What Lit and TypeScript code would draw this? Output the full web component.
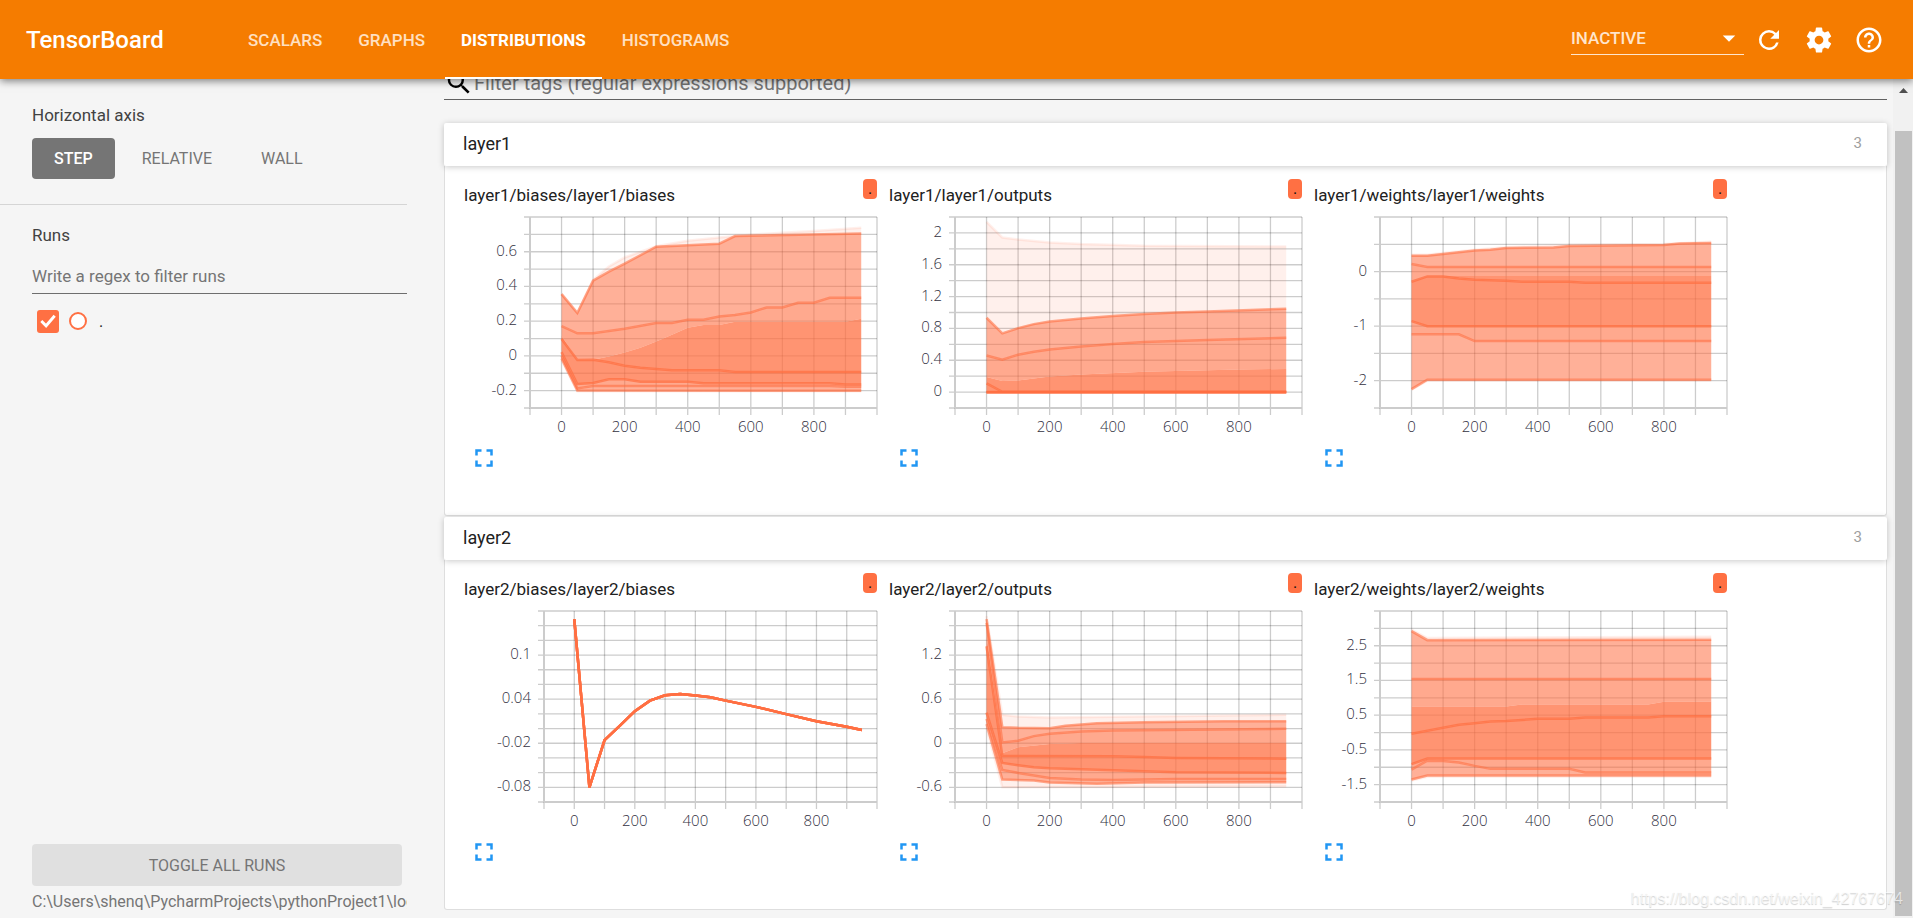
import { LitElement, html, svg, css } from "lit";
import { customElement, property } from "lit/decorators.js";

type Series = [number, number][];

interface ChartSpec {
  title: string;
  left: number;
  min: number;
  max: number;
  gridStep: number;
  labels: number[];
  /** Percentile curves, highest first: max, 93, 84, 69, 50, 30, 16, 7, min. */
  curves: Series[];
}

const END = 950;
const flat = (v: number): Series => [[0, v], [END, v]];

const layer1: ChartSpec[] = [
  {
    title: "layer1/biases/layer1/biases",
    left: 66, min: -0.3, max: 0.8, gridStep: 0.1,
    labels: [-0.2, 0, 0.2, 0.4, 0.6],
    curves: [
      [[0, .358], [50, .249], [100, .437], [150, .515], [200, .567], [300, .632], [400, .663], [500, .682], [600, .698], [700, .71], [800, .72], [END, .738]],
      [[0, .356], [50, .247], [100, .433], [150, .485], [200, .531], [300, .629], [500, .646], [550, .69], [END, .705]],
      [[0, .172], [50, .13], [100, .13], [200, .156], [300, .189], [350, .189], [400, .208], [450, .208], [500, .227], [550, .235], [600, .25], [650, .279], [700, .279], [750, .306], [800, .306], [850, .335], [END, .335]],
      [[0, .116], [50, -.022], [100, -.022], [150, -.003], [200, .02], [250, .047], [300, .083], [350, .122], [400, .162], [450, .178], [500, .178], [550, .197], [900, .197], [END, .214]],
      [[0, .097], [50, -.024], [100, -.022], [150, -.037], [200, -.057], [250, -.068], [350, -.083], [500, -.083], [550, -.093], [END, -.093]],
      [[0, .022], [50, -.162], [100, -.156], [150, -.135], [200, -.135], [250, -.149], [400, -.149], [450, -.158], [850, -.158], [900, -.164], [END, -.164]],
      [[0, 0], [50, -.187], [100, -.174], [850, -.174], [900, -.178], [END, -.178]],
      [[0, -.015], [50, -.199], [END, -.201]],
      [[0, -.025], [50, -.203], [END, -.204]],
    ],
  },
  {
    title: "layer1/layer1/outputs",
    left: 66, min: -0.2, max: 2.2, gridStep: 0.2,
    labels: [0, 0.4, 0.8, 1.2, 1.6, 2],
    curves: [
      [[0, 2.14], [50, 1.943], [100, 1.918], [200, 1.88], [300, 1.86], [500, 1.838], [END, 1.83]],
      [[0, .934], [50, .737], [100, .804], [150, .854], [200, .888], [300, .925], [400, .955], [500, .98], [600, 1], [700, 1.013], [END, 1.047]],
      [[0, .46], [50, .406], [100, .469], [150, .507], [200, .536], [300, .574], [400, .603], [500, .628], [700, .653], [END, .683]],
      [[0, .188], [50, .138], [100, .147], [200, .197], [300, .222], [500, .255], [800, .285], [END, .29]],
      [[0, .109], [50, .003], [END, .003]],
      flat(0), flat(-.002), flat(-.006), flat(-.008),
    ],
  },
  {
    title: "layer1/weights/layer1/weights",
    left: 66, min: -2.5, max: 1, gridStep: 0.5,
    labels: [-2, -1, 0],
    curves: [
      [[0, .31], [50, .31], [100, .34], [200, .4], [300, .445], [500, .485], [800, .505], [END, .545]],
      [[0, .29], [50, .29], [100, .32], [200, .388], [250, .4], [300, .43], [450, .443], [500, .467], [800, .486], [850, .516], [END, .522]],
      [[0, .137], [50, .082], [END, .082]],
      [[0, -.18], [50, -.082], [END, -.082]],
      [[0, -.186], [50, -.089], [100, -.089], [150, -.125], [200, -.15], [300, -.168], [350, -.186], [500, -.186], [550, -.205], [END, -.205]],
      [[0, -.907], [50, -1], [END, -1]],
      [[0, -1.15], [150, -1.15], [200, -1.274], [END, -1.274]],
      [[0, -2.153], [50, -1.982], [END, -1.982]],
      [[0, -2.165], [50, -2], [END, -2]],
    ],
  },
];

const bias2: Series = [[0, .149], [50, -.08], [100, -.0157], [150, .0037], [200, .0236], [250, .038], [300, .0453], [350, .0471], [400, .0449], [450, .0426], [500, .038], [600, .0295], [700, .0196], [800, .01], [900, .0024], [END, -.0021]];

const layer2: ChartSpec[] = [
  {
    title: "layer2/biases/layer2/biases",
    left: 80, min: -0.1, max: 0.16, gridStep: 0.02,
    labels: [-0.08, -0.02, 0.04, 0.1],
    curves: [bias2, bias2, bias2, bias2, bias2, bias2, bias2, bias2, bias2],
  },
  {
    title: "layer2/layer2/outputs",
    left: 66, min: -0.8, max: 1.8, gridStep: 0.2,
    labels: [-0.6, 0, 0.6, 1.2],
    curves: [
      [[0, 1.73], [50, .386], [100, .364], [200, .35], [400, .36], [END, .386]],
      [[0, 1.69], [50, .219], [100, .21], [200, .205], [250, .237], [350, .273], [500, .287], [750, .3], [END, .3]],
      [[0, 1.638], [50, .011], [100, .034], [150, .097], [200, .129], [300, .16], [400, .174], [END, .197]],
      [[0, 1.48], [50, -.138], [100, -.056], [200, -.011], [300, .002], [END, .002]],
      [[0, 1.32], [50, -.174], [400, -.178], [500, -.188], [600, -.2], [END, -.21]],
      [[0, .418], [50, -.269], [100, -.3], [150, -.328], [200, -.341], [400, -.368], [600, -.395], [END, -.404]],
      [[0, .33], [50, -.364], [100, -.404], [150, -.44], [200, -.472], [300, -.495], [400, -.5], [600, -.486], [END, -.486]],
      [[0, .26], [50, -.495], [150, -.508], [200, -.535], [350, -.553], [500, -.535], [END, -.531]],
      [[0, .21], [50, -.6], [END, -.59]],
    ],
  },
  {
    title: "layer2/weights/layer2/weights",
    left: 66, min: -2, max: 3.5, gridStep: 0.5,
    labels: [-1.5, -0.5, 0.5, 1.5, 2.5],
    curves: [
      [[0, 2.96], [50, 2.72], [END, 2.76]],
      [[0, 2.92], [50, 2.66], [END, 2.67]],
      flat(1.54),
      [[0, .75], [300, .75], [350, .81], [750, .81], [800, .89], [END, .89]],
      [[0, -.034], [50, .05], [100, .138], [150, .224], [200, .27], [250, .32], [300, .33], [400, .396], [500, .396], [550, .434], [750, .434], [800, .472], [END, .472]],
      [[0, -.91], [50, -.75], [END, -.75]],
      [[0, -1.066], [50, -.81], [100, -.817], [150, -.86], [200, -.96], [250, -1.046], [500, -1.046], [550, -1.15], [END, -1.15]],
      [[0, -1.35], [50, -1.237], [END, -1.237]],
      [[0, -1.38], [50, -1.275], [END, -1.275]],
    ],
  },
];

const BANDS = [0.1, 0.55, 0.6, 0.75, 0.75, 0.6, 0.55, 0.1];
const LINES = [0.1, 0.6, 0.6, 0, 0.75, 0.75, 0.6, 0.6, 0.1];

@customElement("distribution-chart")
class DistributionChart extends LitElement {
  @property({ attribute: false }) spec!: ChartSpec;

  static styles = css`
    :host { display: block; width: 425px; }
    .top { display: flex; justify-content: space-between; height: 33px; width: 413px; }
    .title { font-size: 17px; line-height: 32px; color: #212121; font-weight: 400; margin: 0; }
    .chip {
      width: 14px; height: 20px; border-radius: 4px; background: #ff7043; color: #111;
      font-size: 16px; line-height: 20px; text-align: center;
    }
    .plot { display: block; }
    .grid { stroke: #000; stroke-opacity: .2; stroke-width: 1.3; }
    .axis { stroke: #ccc; stroke-width: 2; }
    .band { fill: #ff7043; stroke: none; }
    .line { fill: none; stroke: #ff7043; stroke-width: 2.5; }
    .tick { font-family: "Open Sans", "Noto Sans", sans-serif; font-weight: 300; font-size: 15px; fill: #32313f; }
    .end { text-anchor: end; }
    .mid { text-anchor: middle; }
    .full {
      display: block; margin: 5px 0 0 5px; padding: 0; width: 30px; height: 30px;
      border: 0; background: none; cursor: pointer;
    }
    .full svg { display: block; width: 30px; height: 30px; fill: #2196f3; }
  `;

  render() {
    const s = this.spec;
    const top = 5, bottom = 196, right = 413;
    const x = (v: number) => s.left + ((v + 100) / 1100) * (right - s.left);
    const y = (v: number) => bottom - ((v - s.min) / (s.max - s.min)) * (bottom - top);
    const pts = (c: Series) => c.map(([a, b]) => `${x(a).toFixed(2)},${y(b).toFixed(2)}`);
    const rows = Math.round((s.max - s.min) / s.gridStep);
    return html`
      <div class="top">
        <h3 class="title">${s.title}</h3>
        <span class="chip">.</span>
      </div>
      <svg class="plot" width="420" height="226" role="img" aria-label=${s.title}>
        ${Array.from({ length: 12 }, (_, i) => svg`<line class="grid" x1=${x(i * 100 - 100)} x2=${x(i * 100 - 100)} y1=${top} y2=${bottom + 7}></line>`)}
        ${Array.from({ length: rows + 1 }, (_, i) => {
          const gy = y(s.min + i * s.gridStep);
          return svg`<line class="grid" x1=${s.left - 6} x2=${right} y1=${gy} y2=${gy}></line>`;
        })}
        <line class="axis" x1=${s.left} x2=${s.left} y1=${top} y2=${bottom}></line>
        <line class="axis" x1=${s.left} x2=${right} y1=${bottom} y2=${bottom}></line>
        ${BANDS.map((o, i) => svg`<polygon class="band" fill-opacity=${o} points=${[...pts(s.curves[i]), ...pts(s.curves[i + 1]).reverse()].join(" ")}></polygon>`)}
        ${LINES.map((o, i) => svg`<polyline class="line" stroke-opacity=${o} points=${pts(s.curves[i]).join(" ")}></polyline>`)}
        ${s.labels.map((v) => svg`<text class="tick end" x=${s.left - 13} y=${y(v) + 4}>${v}</text>`)}
        ${[0, 200, 400, 600, 800].map((v) => svg`<text class="tick mid" x=${x(v)} y=${bottom + 24}>${v}</text>`)}
      </svg>
      <button class="full" aria-label="Toggle full size">
        <svg viewBox="0 0 24 24"><path d="M7 14H5v5h5v-2H7v-3zm-2-4h2V7h3V5H5v5zm12 7h-3v2h5v-5h-2v3zM14 5v2h3v3h2V5h-5z"></path></svg>
      </button>
    `;
  }
}

@customElement("app-root")
class AppRoot extends LitElement {
  static styles = css`
    :host {
      display: flex; flex-direction: column; position: relative; height: 100vh; overflow: hidden;
      font-family: Roboto, sans-serif; background: #f5f5f5; color: #212121;
    }
    * { box-sizing: border-box; }
    button, input, select { font-family: inherit; }
    .bar {
      flex: none; position: relative; z-index: 2; display: flex; align-items: center; height: 79px;
      padding: 0 29px 0 26px; background: #f57c00; color: #fff;
      box-shadow: 0 2px 8px rgba(0, 0, 0, .5);
    }
    .brand { width: 206px; margin: 0; font-size: 24px; font-weight: 500; line-height: 32px; }
    .tabs { display: flex; gap: 4px; align-self: stretch; flex: 1; }
    .tab {
      display: flex; align-items: center; padding: 2px 16px 0; font-size: 17px; font-weight: 500;
      color: #ffe0c2; text-decoration: none; border-bottom: 2px solid transparent;
    }
    .tab.active { color: #fff; font-weight: 700; border-bottom-color: #fff; }
    .mode { display: flex; align-items: center; width: 173px; margin: 0 10px 2px 0; height: 32px; border-bottom: 1px solid #ffe5cc; }
    .mode select {
      flex: 1; appearance: none; border: 0; padding: 0; background: none; color: #ffe5cc;
      font-size: 17px; font-weight: 500; line-height: 24px;
    }
    .mode svg { width: 30px; height: 30px; fill: #fff; }
    .tools { display: flex; gap: 20px; }
    .tools button { border: 0; padding: 0; background: none; width: 30px; height: 30px; }
    .tools svg { display: block; width: 30px; height: 30px; fill: #fff; }
    .body { flex: 1; min-height: 0; display: flex; }
    .side { flex: none; width: 407px; display: flex; flex-direction: column; }
    .axis { padding: 24px 0 25px 32px; border-bottom: 1px solid #d5d5d5; }
    .heading { margin: 0; font-size: 17px; font-weight: 400; line-height: 24px; color: #424242; }
    .opts { display: flex; gap: 5px; margin-top: 11px; }
    .opt {
      height: 41px; padding: 0 22px; border: 0; border-radius: 4px; background: none;
      color: #757575; font-size: 16px;
    }
    .opt.on { background: #757575; color: #fff; font-weight: 500; }
    .runs { flex: 1; display: flex; flex-direction: column; padding: 18px 0 0 32px; }
    .regex {
      margin-top: 12px; height: 35px; padding: 0; border: 0; border-bottom: 1px solid #6e6e6e; border-radius: 0;
      background: none; font-size: 17px; color: #424242; outline: 0;
    }
    .regex::placeholder, .filter input::placeholder { color: #757575; opacity: 1; }
    .run { display: flex; align-items: center; gap: 10px; margin: 14px 0 0 5px; height: 26px; font-size: 16px; }
    .box {
      appearance: none; margin: 0; width: 22px; height: 23px; border-radius: 3px;
      background: #ff7043 url('data:image/svg+xml,<svg xmlns="http://www.w3.org/2000/svg" viewBox="0 0 23 23"><path d="M4.5 11.5l5 5 9-10.500" fill="none" stroke="white" stroke-width="3"/></svg>');
    }
    .dot { width: 18px; height: 18px; margin-right: 2px; border: 2px solid #ff7043; border-radius: 50%; background: #fff; }
    .toggle {
      margin: auto 5px 0 0; height: 42px; border: 0; border-radius: 4px; background: #e0e0e0;
      color: #757575; font-size: 16px;
    }
    .path { height: 32px; overflow: hidden; white-space: nowrap; font-size: 16px; line-height: 32px; color: #757575; }
    .main { flex: 1; min-width: 0; padding: 0 6px 0 37px; }
    .filter {
      display: flex; align-items: flex-end; height: 21px; overflow: hidden; border-bottom: 1px solid #616161;
    }
    .filter svg { flex: none; width: 30px; height: 30px; margin-bottom: 1px; }
    .filter input { flex: 1; height: 32px; border: 0; padding: 0; background: none; font-size: 20px; outline: 0; }
    .group { margin-top: 23px; }
    .group + .group { margin-top: 1px; }
    .head {
      display: flex; justify-content: space-between; align-items: center; width: 100%; height: 43px; padding: 0 25px 3px 19px;
      border: 0; border-radius: 2px; background: #fff; position: relative;
      box-shadow: 0 1px 6px rgba(0, 0, 0, .22); color: #212121; font-size: 18px; font-weight: 400; text-align: left;
    }
    .count { font-size: 15px; color: #9e9e9e; }
    .cards {
      display: flex; flex-wrap: wrap; min-height: 350px; padding: 13px 18px 0 19px; background: #fff;
      border: 1px solid #dedede; border-top: 0; border-radius: 0 0 3px 3px;
    }
    .scroll { flex: none; width: 20px; background: #f1f1f1; padding: 9px 1px 2px 2px; display: flex; flex-direction: column; align-items: center; }
    .scroll svg { display: block; width: 9px; height: 5px; fill: #505050; }
    .thumb { width: 17px; margin-top: 38px; flex: 1; background: #c1c1c1; }
    .mark {
      position: absolute; right: 10px; bottom: 8px; z-index: 3; font: 16px/22px "Liberation Sans", sans-serif;
      color: rgba(255, 255, 255, .7); text-shadow: 0 1px 1px rgba(0, 0, 0, .2);
    }
  `;

  private group(name: string, charts: ChartSpec[]) {
    return html`
      <section class="group">
        <button class="head"><span>${name}</span><span class="count">${charts.length}</span></button>
        <div class="cards">
          ${charts.map((c) => html`<distribution-chart .spec=${c}></distribution-chart>`)}
        </div>
      </section>
    `;
  }

  render() {
    return html`
      <header class="bar">
        <h1 class="brand">TensorBoard</h1>
        <nav class="tabs">
          <a class="tab" href="#scalars">SCALARS</a>
          <a class="tab" href="#graphs">GRAPHS</a>
          <a class="tab active" href="#distributions">DISTRIBUTIONS</a>
          <a class="tab" href="#histograms">HISTOGRAMS</a>
        </nav>
        <div class="mode">
          <select aria-label="Inactive dashboards"><option>INACTIVE</option></select>
          <svg viewBox="0 0 24 24"><path d="M7 10l5 5 5-5z"></path></svg>
        </div>
        <div class="tools">
          <button aria-label="Reload"><svg viewBox="0 0 24 24"><path d="M17.650 6.350A7.958 7.958 0 0 0 12 4a8 8 0 1 0 7.730 10h-2.080A5.990 5.990 0 0 1 12 18a6 6 0 1 1 0-12c1.660 0 3.140.690 4.220 1.780L13 11h7V4l-2.350 2.350z"></path></svg></button>
          <button aria-label="Settings"><svg viewBox="0 0 24 24"><path d="M19.430 12.980c.040-.320.070-.640.070-.980s-.030-.660-.070-.980l2.110-1.650c.190-.150.240-.420.120-.640l-2-3.460c-.120-.220-.390-.300-.610-.220l-2.490 1c-.520-.400-1.080-.730-1.690-.980l-.380-2.650A.488.488 0 0 0 14 2h-4c-.250 0-.460.180-.490.420l-.380 2.650c-.610.250-1.170.590-1.690.980l-2.490-1c-.230-.090-.490 0-.610.220l-2 3.460c-.130.220-.070.490.120.640l2.110 1.650c-.040.320-.070.650-.070.980s.030.660.070.980l-2.110 1.650c-.190.150-.240.420-.120.640l2 3.460c.120.220.390.300.610.220l2.490-1c.520.400 1.080.730 1.690.980l.380 2.650c.030.240.240.420.490.420h4c.250 0 .460-.180.490-.420l.380-2.650c.610-.250 1.170-.590 1.690-.980l2.490 1c.230.090.490 0 .610-.220l2-3.460c.120-.220.070-.490-.120-.640l-2.110-1.650zM12 15.500c-1.930 0-3.500-1.570-3.500-3.500s1.570-3.500 3.500-3.500 3.500 1.570 3.500 3.500-1.570 3.500-3.500 3.500z"></path></svg></button>
          <button aria-label="Help"><svg viewBox="0 0 24 24"><path d="M11 18h2v-2h-2v2zm1-16C6.480 2 2 6.480 2 12s4.480 10 10 10 10-4.480 10-10S17.520 2 12 2zm0 18c-4.410 0-8-3.590-8-8s3.590-8 8-8 8 3.590 8 8-3.590 8-8 8zm0-14c-2.210 0-4 1.790-4 4h2c0-1.100.900-2 2-2s2 .900 2 2c0 2-3 1.750-3 5h2c0-2.250 3-2.500 3-5 0-2.210-1.790-4-4-4z"></path></svg></button>
        </div>
      </header>
      <div class="body">
        <aside class="side">
          <div class="axis">
            <h2 class="heading">Horizontal axis</h2>
            <div class="opts">
              <button class="opt on">STEP</button>
              <button class="opt">RELATIVE</button>
              <button class="opt">WALL</button>
            </div>
          </div>
          <div class="runs">
            <h2 class="heading">Runs</h2>
            <input class="regex" type="text" aria-label="Write a regex to filter runs" placeholder="Write a regex to filter runs" />
            <label class="run"><input class="box" type="checkbox" checked /><span class="dot"></span><span>.</span></label>
            <button class="toggle">TOGGLE ALL RUNS</button>
            <div class="path">C:\\Users\\shenq\\PycharmProjects\\pythonProject1\\logs</div>
          </div>
        </aside>
        <main class="main">
          <label class="filter">
            <svg viewBox="0 0 24 24"><path d="M15.500 14h-.790l-.280-.270A6.471 6.471 0 0 0 16 9.500 6.500 6.500 0 1 0 9.500 16c1.610 0 3.090-.590 4.230-1.570l.270.280v.790l5 4.990L20.490 19l-4.990-5zm-6 0C7.010 14 5 11.990 5 9.500S7.010 5 9.500 5 14 7.010 14 9.500 11.990 14 9.500 14z"></path></svg>
            <input type="text" aria-label="Filter tags" placeholder="Filter tags (regular expressions supported)" />
          </label>
          ${this.group("layer1", layer1)}
          ${this.group("layer2", layer2)}
        </main>
        <div class="scroll" aria-hidden="true">
          <svg viewBox="0 0 9 5"><path d="M0 5L4.500 0 9 5z"></path></svg>
          <div class="thumb"></div>
        </div>
      </div>
      <div class="mark">https://blog.csdn.net/weixin_42767674</div>
    `;
  }
}
